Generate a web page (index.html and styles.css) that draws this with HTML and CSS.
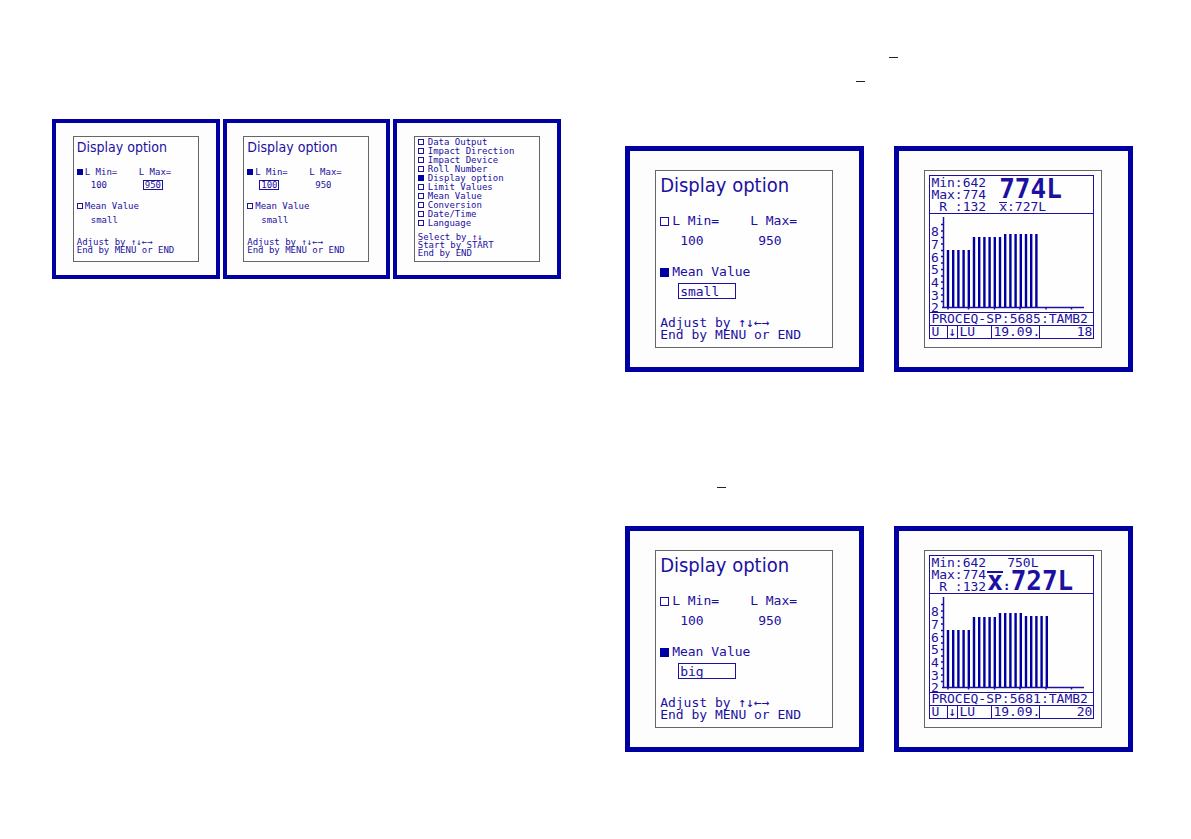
FILE: index.html
```html
<!DOCTYPE html>
<html lang="en">
<head>
<meta charset="utf-8">
<title>Display option</title>
<link rel="stylesheet" href="styles.css">
</head>
<body>
<main class="spread">
  <section class="left-page">
    <div class="strip">
      <article class="frame small">
        <form class="lcd">
          <h2 class="title">Display option</h2>
          <div class="setting range">
            <input class="box" type="checkbox" aria-label="L range" checked>
            <div class="field"><label for="a-min">L Min=</label><input class="value" id="a-min" type="text" value="100"></div>
            <div class="field"><label for="a-max">L Max=</label><input class="value active" id="a-max" type="text" value="950"></div>
          </div>
          <div class="setting mean">
            <input class="box" type="checkbox" aria-label="Mean value selected">
            <div class="field"><label for="a-mean">Mean Value</label><input class="value wide" id="a-mean" type="text" value="small"></div>
          </div>
          <p class="help">Adjust by ↑↓←→<br>End by MENU or END</p>
        </form>
      </article>
      <article class="frame small">
        <form class="lcd">
          <h2 class="title">Display option</h2>
          <div class="setting range">
            <input class="box" type="checkbox" aria-label="L range" checked>
            <div class="field"><label for="b-min">L Min=</label><input class="value active" id="b-min" type="text" value="100"></div>
            <div class="field"><label for="b-max">L Max=</label><input class="value" id="b-max" type="text" value="950"></div>
          </div>
          <div class="setting mean">
            <input class="box" type="checkbox" aria-label="Mean value selected">
            <div class="field"><label for="b-mean">Mean Value</label><input class="value wide" id="b-mean" type="text" value="small"></div>
          </div>
          <p class="help">Adjust by ↑↓←→<br>End by MENU or END</p>
        </form>
      </article>
      <article class="frame small">
        <form class="lcd menu">
          <label class="item"><input class="box" type="checkbox">Data Output</label>
          <label class="item"><input class="box" type="checkbox">Impact Direction</label>
          <label class="item"><input class="box" type="checkbox">Impact Device</label>
          <label class="item"><input class="box" type="checkbox">Roll Number</label>
          <label class="item"><input class="box" type="checkbox" checked>Display option</label>
          <label class="item"><input class="box" type="checkbox">Limit Values</label>
          <label class="item"><input class="box" type="checkbox">Mean Value</label>
          <label class="item"><input class="box" type="checkbox">Conversion</label>
          <label class="item"><input class="box" type="checkbox">Date/Time</label>
          <label class="item"><input class="box" type="checkbox">Language</label>
          <p class="help">Select by ↑↓<br>Start by START<br>End by END</p>
        </form>
      </article>
    </div>
  </section>

  <section class="right-page">
    <div class="notes intro"><span class="bar first"></span><span class="bar second"></span></div>
    <div class="pair">
      <article class="frame large">
        <form class="lcd">
          <h2 class="title">Display option</h2>
          <div class="setting range">
            <input class="box" type="checkbox" aria-label="L range">
            <div class="field"><label for="c-min">L Min=</label><input class="value" id="c-min" type="text" value="100"></div>
            <div class="field"><label for="c-max">L Max=</label><input class="value" id="c-max" type="text" value="950"></div>
          </div>
          <div class="setting mean">
            <input class="box" type="checkbox" aria-label="Mean value selected" checked>
            <div class="field"><label for="c-mean">Mean Value</label><input class="value wide active" id="c-mean" type="text" value="small"></div>
          </div>
          <p class="help">Adjust by ↑↓←→<br>End by MENU or END</p>
        </form>
      </article>
      <article class="frame large">
        <div class="lcd reading">
          <div class="panel">
            <div class="summary">
              <p class="stats">Min:642<br>Max:774<br>&nbsp;R&nbsp;:132</p>
              <div class="result">
                <strong class="big">774L</strong>
                <span class="line"><span class="xbar">x</span>:727L</span>
              </div>
            </div>
            <svg class="chart" viewBox="0 0 163 98" role="img" aria-label="Measured values">
              <g class="scale"><text x="1" y="22">8</text><text x="1" y="35">7</text><text x="1" y="48">6</text><text x="1" y="60">5</text><text x="1" y="73">4</text><text x="1" y="86">3</text><text x="1" y="98">2</text></g>
              <path class="axis" d="M13.5 3V94M12 93.5H154M11 10.5h2M11 17h2M11 23.500h2M11 30h2M11 36.500h2M11 42.500h2M11 49h2M11 55.500h2M11 62h2M11 68h2M11 74.500h2M11 81h2M11 87.500h2M18 94v1.500M38.500 94v1.500M64.500 94v1.500M90 94v1.500M116 94v1.500M141.500 94v1.500"/>
              <path class="bars" d="M18 36V93M23.200 36V93M28.400 36V93M33.600 36V93M38.800 36V93M44 23V93M49.200 23V93M54.400 23V93M59.600 23V93M64.800 23V93M70 23V93M75.200 20V93M80.400 20V93M85.600 20V93M90.800 20V93M96 20V93M101.200 20V93M106.400 20V93"/>
            </svg>
            <p class="series">PROCEQ-SP:5685:TAMB2</p>
            <div class="status"><span class="cell unit">U</span><span class="cell arrow">↓</span><span class="cell mode">LU</span><span class="cell date">19.09.</span><span class="cell count">18</span></div>
          </div>
        </div>
      </article>
    </div>
    <div class="notes between"><span class="bar third"></span></div>
    <div class="pair">
      <article class="frame large">
        <form class="lcd">
          <h2 class="title">Display option</h2>
          <div class="setting range">
            <input class="box" type="checkbox" aria-label="L range">
            <div class="field"><label for="d-min">L Min=</label><input class="value" id="d-min" type="text" value="100"></div>
            <div class="field"><label for="d-max">L Max=</label><input class="value" id="d-max" type="text" value="950"></div>
          </div>
          <div class="setting mean">
            <input class="box" type="checkbox" aria-label="Mean value selected" checked>
            <div class="field"><label for="d-mean">Mean Value</label><input class="value wide active" id="d-mean" type="text" value="big"></div>
          </div>
          <p class="help">Adjust by ↑↓←→<br>End by MENU or END</p>
        </form>
      </article>
      <article class="frame large">
        <div class="lcd reading">
          <div class="panel">
            <div class="summary">
              <p class="stats">Min:642<br>Max:774<br>&nbsp;R&nbsp;:132</p>
              <div class="result mean-first">
                <span class="line">750L</span>
                <strong class="big"><span class="xbar">x</span><span class="colon">:</span>727L</strong>
              </div>
            </div>
            <svg class="chart" viewBox="0 0 163 98" role="img" aria-label="Measured values">
              <g class="scale"><text x="1" y="22">8</text><text x="1" y="35">7</text><text x="1" y="48">6</text><text x="1" y="60">5</text><text x="1" y="73">4</text><text x="1" y="86">3</text><text x="1" y="98">2</text></g>
              <path class="axis" d="M13.5 3V94M12 93.5H154M11 10.5h2M11 17h2M11 23.500h2M11 30h2M11 36.500h2M11 42.500h2M11 49h2M11 55.500h2M11 62h2M11 68h2M11 74.500h2M11 81h2M11 87.500h2M18 94v1.500M38.500 94v1.500M64.500 94v1.500M90 94v1.500M116 94v1.500M141.500 94v1.500"/>
              <path class="bars" d="M18 36V93M23.200 36V93M28.400 36V93M33.600 36V93M38.800 36V93M44 23V93M49.200 23V93M54.400 23V93M59.600 23V93M64.800 23V93M70 19V93M75.200 19V93M80.400 19V93M85.600 19V93M90.800 19V93M96 22V93M101.200 22V93M106.400 22V93M111.600 22V93M116.800 22V93"/>
            </svg>
            <p class="series">PROCEQ-SP:5681:TAMB2</p>
            <div class="status"><span class="cell unit">U</span><span class="cell arrow">↓</span><span class="cell mode">LU</span><span class="cell date">19.09.</span><span class="cell count">20</span></div>
          </div>
        </div>
      </article>
    </div>
  </section>
</main>
</body>
</html>
```

FILE: styles.css
```css
:root {
  --ink: #1c10a0;
  --frame: #0000a2;
  --mono: "DejaVu Sans Mono", "Liberation Mono", monospace;
}

* { box-sizing: border-box; }

body { margin: 0; background: #fff; color: var(--ink); font-family: var(--mono); }

p, h2 { margin: 0; }

.spread {
  display: grid;
  grid-template-columns: minmax(0, 1fr) minmax(0, 1fr);
  gap: 64px;
  padding: 0 58px 0 52px;
}

.left-page { padding-top: 119px; }
.strip { display: flex; gap: 3px; }
.pair { display: flex; gap: 30px; }

.notes { display: flex; flex-direction: column; }
.intro { height: 146px; padding-top: 57px; gap: 23px; }
.between { height: 154px; padding-top: 115px; }
.bar { width: 9px; height: 1px; background: #222; }
.first { margin-left: 264px; }
.second { margin-left: 231px; }
.third { margin-left: 92px; }

.frame {
  flex: 1 1 0;
  display: flex;
  justify-content: center;
  border: 4px solid var(--frame);
  background: #fdfdfe;
}
.lcd { flex: none; border: 1px solid #666; background: #fefefe; white-space: nowrap; }

.box {
  appearance: none;
  flex: none;
  margin: 0;
  border: 1px solid var(--ink);
  background: transparent;
}
.box:checked { border-color: var(--frame); background: var(--frame); }

.title {
  font-family: "DejaVu Sans Condensed", "DejaVu Sans", sans-serif;
  font-weight: 400;
}
.setting { display: flex; }
.field { display: flex; flex-direction: column; }
.value {
  border: 1px solid transparent;
  border-radius: 0;
  background: transparent;
  color: inherit;
  font: inherit;
}
.value.active { border-color: var(--ink); }

/* compact screens */
.small { padding: 13px 0; }
.small .lcd { width: 126px; height: 126px; padding: 0 3px; font-size: 9px; line-height: 8px; }
.small .title { font-size: 14px; line-height: 20px; }
.small .box { width: 6px; height: 6px; margin: 1px 2px 0 0; }
.small .range { margin-top: 11px; }
.small .mean { margin-top: 12px; }
.small .range .field { width: 54px; }
.small .value { width: 20px; height: 10px; margin: 4px 0 0 4px; padding: 0 1px; line-height: 8px; }
.small .value.wide { width: 40px; margin-top: 5px; }
.small .help { margin-top: 13px; }

.small .menu { padding-top: 1px; }
.menu .item { display: flex; line-height: 9px; }
.menu .item .box { margin-right: 4px; }
.small .menu .help { margin-top: 5px; }

/* full-size screens */
.large { border-width: 5px; padding: 19px 0; }
.large .lcd { width: 178px; height: 178px; padding: 0 4px; font-size: 13px; line-height: 12px; }
.large .title { font-size: 20px; line-height: 28px; }
.large .box { width: 9px; height: 9px; margin: 2px 3px 0 0; }
.large .range { margin-top: 16px; }
.large .mean { margin-top: 18px; }
.large .range .field { width: 78px; }
.large .value { width: 32px; height: 16px; margin: 5px 0 0 6px; padding: 0 1px; line-height: 14px; }
.large .value.wide { width: 58px; }
.large .help { margin-top: 18px; }

/* measurement screens */
.large .reading { padding: 4px 7px 8px 4px; }
.panel { display: flex; flex-direction: column; height: 100%; border: 1px solid var(--ink); }
.summary { display: flex; height: 38px; padding: 1px 0 0 1px; border-bottom: 1px solid var(--ink); }
.result { display: flex; flex-direction: column; padding-left: 13px; }
.big { display: flex; align-items: baseline; font-size: 26px; line-height: 24px; }
.xbar { display: inline-block; border-top: 1px solid var(--ink); line-height: 8px; }
.big .xbar { border-top-width: 2px; line-height: 16px; }
.mean-first { padding-left: 1px; }
.mean-first .line { padding-left: 20px; }
.big .colon { font-size: 13px; }
.chart { flex: 1 1 0; min-height: 0; width: 100%; overflow: visible; }
.scale { fill: var(--ink); font-size: 13px; }
.axis { fill: none; stroke: var(--ink); stroke-width: 1.5; }
.bars { fill: none; stroke: var(--frame); stroke-width: 2.4; }
.series { padding-left: 1px; border-top: 1px solid var(--ink); border-bottom: 1px solid var(--ink); }
.status { display: flex; }
.cell { padding-left: 1px; border-right: 1px solid var(--ink); }
.unit { width: 18px; }
.arrow { width: 10px; padding-left: 0; }
.mode { width: 34px; }
.date { width: 48px; }
.count { flex: 1; padding-right: 1px; border-right: 0; text-align: right; }
```
